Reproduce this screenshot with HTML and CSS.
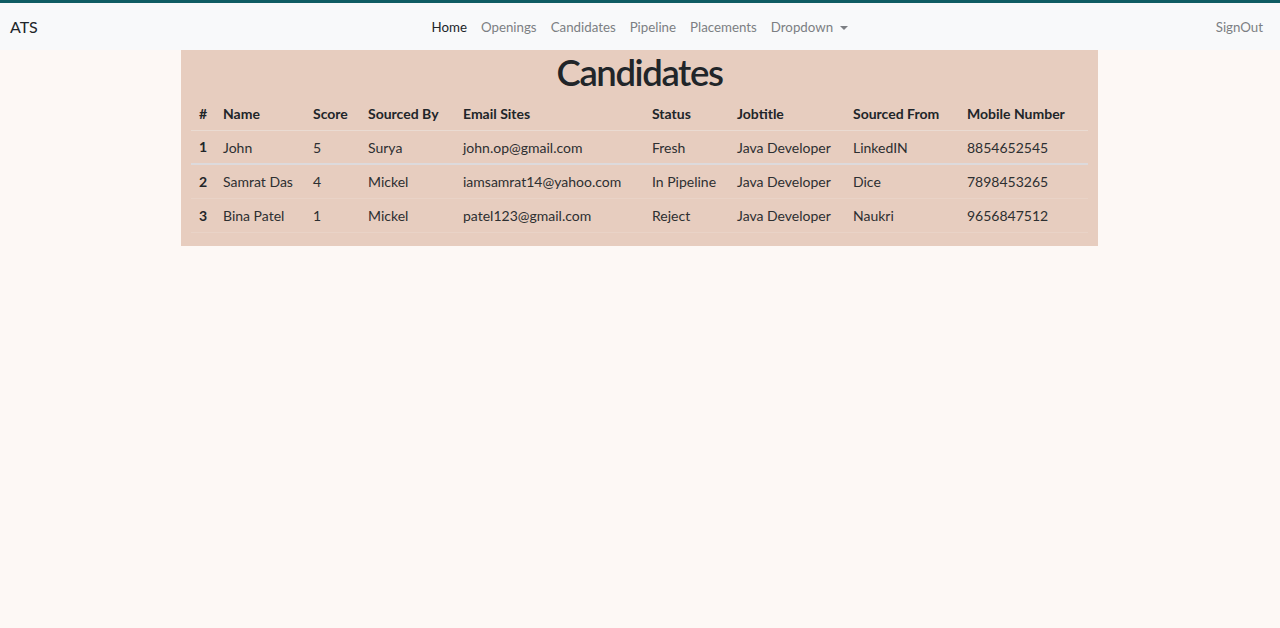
FILE: index.html
```html
<!DOCTYPE html>
<html lang="en">
<head>
<meta charset="utf-8">
<title>ATS</title>
<link rel="stylesheet" href="styles.css">
</head>
<body>
<header class="navbar">
  <a class="brand" href="#">ATS</a>
  <nav class="nav">
    <a class="nav-link active" href="#">Home</a>
    <a class="nav-link" href="#">Openings</a>
    <a class="nav-link" href="#">Candidates</a>
    <a class="nav-link" href="#">Pipeline</a>
    <a class="nav-link" href="#">Placements</a>
    <a class="nav-link dropdown" href="#">Dropdown <span class="caret"></span></a>
  </nav>
  <a class="nav-link signout" href="#">SignOut</a>
</header>
<main class="page">
  <section class="panel">
    <h1 class="title">Candidates</h1>
    <table class="table">
      <colgroup>
        <col class="c1"><col class="c2"><col class="c3"><col class="c4"><col class="c5"><col class="c6"><col class="c7"><col class="c8"><col class="c9">
      </colgroup>
      <thead>
        <tr><th>#</th><th>Name</th><th>Score</th><th>Sourced By</th><th>Email Sites</th><th>Status</th><th>Jobtitle</th><th>Sourced From</th><th>Mobile Number</th></tr>
      </thead>
      <tbody>
        <tr class="r1"><th>1</th><td>John</td><td>5</td><td>Surya</td><td>john.op@gmail.com</td><td>Fresh</td><td>Java Developer</td><td>LinkedIN</td><td>8854652545</td></tr>
        <tr><th>2</th><td>Samrat Das</td><td>4</td><td>Mickel</td><td>iamsamrat14@yahoo.com</td><td>In Pipeline</td><td>Java Developer</td><td>Dice</td><td>7898453265</td></tr>
        <tr><th>3</th><td>Bina Patel</td><td>1</td><td>Mickel</td><td>patel123@gmail.com</td><td>Reject</td><td>Java Developer</td><td>Naukri</td><td>9656847512</td></tr>
      </tbody>
    </table>
  </section>
</main>
</body>
</html>
```
FILE: styles.css
```css
* { box-sizing: border-box; }
html, body { height: 100%; }
body {
  margin: 0;
  font-family: "Lato", "Noto Sans", sans-serif;
  font-size: 14px;
  color: #212529;
  background: #fdf8f5;
  border-top: 3px solid #0f5c63;
}
a { text-decoration: none; }
.navbar {
  display: grid;
  grid-template-columns: 1fr auto 1fr;
  align-items: center;
  height: 47px;
  padding: 0 17px 0 10px;
  background: #f8f9fa;
}
.brand {
  font-size: 16px;
  color: #212529;
  justify-self: start;
}
.nav {
  display: flex;
  justify-content: center;
  padding-left: 6px;
}
.nav-link {
  color: #7c7f83;
  padding: 0 7px;
  font-size: 13.3px;
}
.nav-link.active { color: #212529; }
.caret {
  display: inline-block;
  width: 0;
  height: 0;
  border-left: 4px solid transparent;
  border-right: 4px solid transparent;
  border-top: 4.5px solid #7c7f83;
  vertical-align: 2px;
  margin-left: 3px;
}
.signout { padding: 0; justify-self: end; }
.page {
  display: flex;
  justify-content: center;
  padding-right: 1px;
}
.panel {
  width: 917px;
  background: #e7cdbf;
  padding: 0 10px 13px;
}
.title {
  margin: 0;
  text-align: center;
  font-size: 36.5px;
  font-weight: 600;
  letter-spacing: -1.4px;
  line-height: 44px;
  padding-top: 0;
  color: #212529;
}
.table {
  width: 897px;
  border-collapse: collapse;
  table-layout: fixed;
}
.table th, .table td {
  text-align: left;
  padding: 0 8px;
  height: 34px;
  white-space: nowrap;
}
.table thead th { height: 36px; padding-top: 4px; border-bottom: 1px solid #eadbd2; }
.table th { font-weight: 700; }
.table td { font-weight: 400; color: #2d2f31; }
.table tbody td { padding-top: 1px; }
.table tbody tr { border-bottom: 1px solid #e9d3c7; }
.table tbody tr.r1 { border-bottom: 2px solid #dddadc; }
.c1 { width: 24px; }
.c2 { width: 90px; }
.c3 { width: 55px; }
.c4 { width: 95px; }
.c5 { width: 189px; }
.c6 { width: 85px; }
.c7 { width: 116px; }
.c8 { width: 114px; }
.c9 { width: 129px; }
```
